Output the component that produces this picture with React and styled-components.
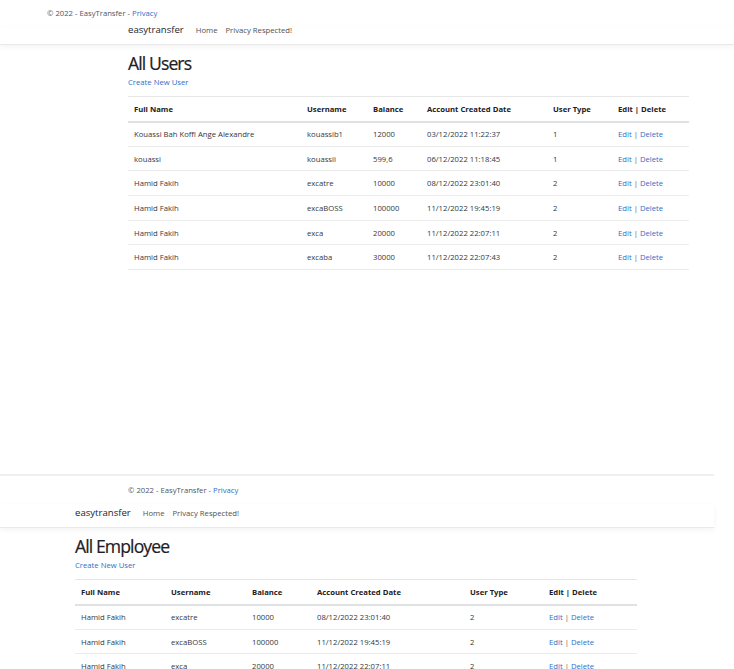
import styled, { createGlobalStyle } from "styled-components";

const GlobalStyle = createGlobalStyle`
  html, body {
    margin: 0;
    padding: 0;
    background: #ffffff;
  }
  body {
    font-family: "Open Sans", "Noto Sans", sans-serif;
    color: #212529;
    overflow: hidden;
  }
  * {
    box-sizing: border-box;
  }
`;

const Screen = styled.div`
  width: 734px;
  height: 669px;
  overflow: hidden;
  display: flex;
  flex-direction: column;
`;

const Page = styled.section`
  width: ${(p) => p.width}px;
  height: ${(p) => p.height}px;
  flex-shrink: 0;
  border-top: ${(p) => (p.topBorder ? "2px solid #efefef" : "none")};
`;

const FooterBar = styled.footer`
  height: ${(p) => p.height}px;
  display: flex;
  align-items: center;
  padding-left: ${(p) => p.indent}px;
  padding-bottom: 1px;
  font-size: 7.7px;
  color: #50565c;
`;

const NavBar = styled.nav`
  height: ${(p) => p.height}px;
  display: flex;
  align-items: flex-end;
  gap: 11px;
  padding-left: ${(p) => p.indent}px;
  padding-bottom: 9px;
  line-height: 10px;
  border-bottom: 1px solid #e9e9e9;
  box-shadow: 0 2px 6px rgba(0, 0, 0, 0.05);
`;

const Brand = styled.span`
  font-size: 9.6px;
  color: #222529;
  margin-right: 1px;
`;

const NavLinks = styled.div`
  display: flex;
  gap: 8px;
`;

const NavLink = styled.span`
  font-size: 7.7px;
  color: #505050;
`;

const Main = styled.main`
  padding-left: ${(p) => p.indent}px;
  padding-top: 7px;
`;

const Title = styled.h1`
  margin: 0;
  font-size: 17.6px;
  font-weight: 500;
  line-height: 22px;
  letter-spacing: -0.9px;
  color: #1d2024;
  -webkit-text-stroke: 0.2px #1d2024;
`;

const Link = styled.span`
  color: #2f6fc6;
`;

const CreateLink = styled.div`
  font-size: 7.7px;
  line-height: 16px;
  color: #2f6fc6;
  margin-bottom: 6px;
`;

const Table = styled.table`
  width: ${(p) => p.width}px;
  border-collapse: collapse;
  table-layout: fixed;
  font-size: 7.7px;
  color: #34373b;
  border-top: 1px solid #e6e6e6;
`;

const HeadCell = styled.th`
  text-align: left;
  font-weight: 700;
  color: #1d2024;
  height: 25px;
  padding: 0 6px;
  border-bottom: 2px solid #dfe2e5;
`;

const Cell = styled.td`
  height: 24.7px;
  padding: 0 6px;
  border-bottom: 1px solid #ececec;
  white-space: nowrap;
`;

const Sep = styled.span`
  color: #6b5a5a;
`;

const users = [
  ["Kouassi Bah Koffi Ange Alexandre", "kouassib1", "12000", "03/12/2022 11:22:37", "1"],
  ["kouassi", "kouassii", "599,6", "06/12/2022 11:18:45", "1"],
  ["Hamid Fakih", "excatre", "10000", "08/12/2022 23:01:40", "2"],
  ["Hamid Fakih", "excaBOSS", "100000", "11/12/2022 19:45:19", "2"],
  ["Hamid Fakih", "exca", "20000", "11/12/2022 22:07:11", "2"],
  ["Hamid Fakih", "excaba", "30000", "11/12/2022 22:07:43", "2"],
];

const employees = users.slice(2);

const headers = ["Full Name", "Username", "Balance", "Account Created Date", "User Type", "Edit | Delete"];

const UserTable = ({ rows, cols }) => (
  <Table width={cols.reduce((a, b) => a + b, 0)}>
    <colgroup>
      {cols.map((w, i) => (
        <col key={i} style={{ width: w }} />
      ))}
    </colgroup>
    <thead>
      <tr>
        {headers.map((h) => (
          <HeadCell key={h}>{h}</HeadCell>
        ))}
      </tr>
    </thead>
    <tbody>
      {rows.map((r, i) => (
        <tr key={i}>
          {r.map((c, j) => (
            <Cell key={j}>{c}</Cell>
          ))}
          <Cell>
            <Link>Edit</Link> <Sep>|</Sep> <Link>Delete</Link>
          </Cell>
        </tr>
      ))}
    </tbody>
  </Table>
);

const PageLayout = ({ width, height, topBorder, footerIndent, indent, footerH, navH, title, rows, cols }) => (
  <Page width={width} height={height} topBorder={topBorder}>
    <FooterBar indent={footerIndent} height={footerH}>
      © 2022 - EasyTransfer -&nbsp;<Link>Privacy</Link>
    </FooterBar>
    <NavBar indent={indent} height={navH}>
      <Brand>easytransfer</Brand>
      <NavLinks>
        <NavLink>Home</NavLink>
        <NavLink>Privacy Respected!</NavLink>
      </NavLinks>
    </NavBar>
    <Main indent={indent}>
      <Title>{title}</Title>
      <CreateLink>Create New User</CreateLink>
      <UserTable rows={rows} cols={cols} />
    </Main>
  </Page>
);

export default function App() {
  return (
    <Screen>
      <GlobalStyle />
      <PageLayout
        width={734}
        height={474}
        footerIndent={47}
        indent={128}
        footerH={27}
        navH={18}
        title="All Users"
        rows={users}
        cols={[173, 66, 54, 126, 65, 77]}
      />
      <PageLayout
        width={714}
        height={195}
        topBorder
        footerIndent={128}
        indent={75}
        footerH={28}
        navH={24}
        title="All Employee"
        rows={employees}
        cols={[90, 81, 65, 153, 79, 94]}
      />
    </Screen>
  );
}
